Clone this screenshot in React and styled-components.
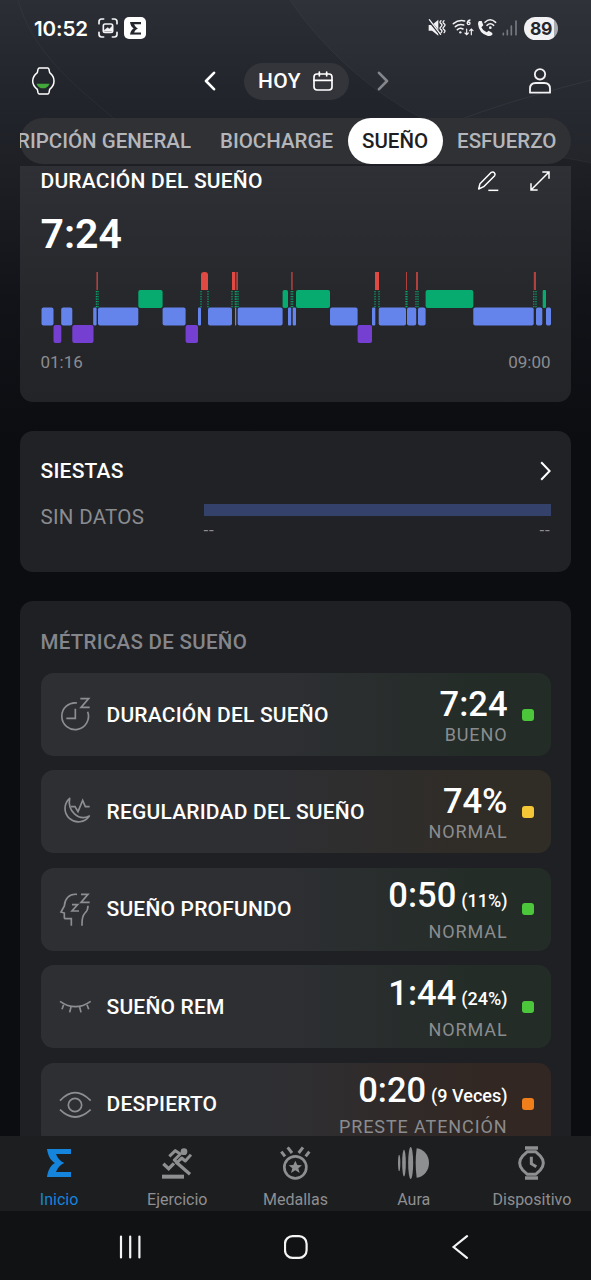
import React from 'react';
import styled, { createGlobalStyle } from 'styled-components';


const STAGES = {
    awake: { y: 0, color: '#e04a43' },
    rem: { y: 18, color: '#07ab70' },
    light: { y: 35.5, color: '#6484ec' },
    deep: { y: 53, color: '#7540d2' },
};

// [stage, start, end] along the 510 units of the night
const NIGHT = [
    ['light', 0.5, 12.5], ['deep', 12.5, 20.3], ['light', 20.2, 31.3], ['deep', 31.3, 52.5],
    ['light', 52.2, 55.6], ['awake', 55.4, 57], ['light', 57, 97.3], ['rem', 97.3, 121.6],
    ['light', 121.6, 144.6], ['deep', 144.6, 157], ['light', 157, 160], ['awake', 160, 167],
    ['light', 167, 191], ['awake', 191, 194.3], ['light', 194, 195.2], ['awake', 195.2, 197],
    ['light', 196.7, 241.6], ['rem', 241.6, 247], ['light', 247, 250.2], ['awake', 250.2, 251.7],
    ['light', 251.7, 255], ['rem', 255, 289], ['light', 289, 316.6], ['deep', 316.6, 331],
    ['light', 331, 334.3], ['awake', 334, 338], ['light', 337.7, 365], ['awake', 365, 366],
    ['light', 366, 375.2], ['awake', 375, 377], ['light', 377, 384.6], ['rem', 384.6, 432.3],
    ['light', 432.3, 492.7], ['awake', 492.8, 495], ['light', 495, 501.3], ['rem', 501.7, 505],
    ['light', 505, 510],
];

const TABS = [
    { name: 'DESCRIPCIÓN GENERAL' },
    { name: 'BIOCHARGE' },
    { name: 'SUEÑO', active: true },
    { name: 'ESFUERZO' },
];

const METRICS = [
    { icon: ClockIcon, name: 'DURACIÓN DEL SUEÑO', value: '7:24', status: 'BUENO', color: '#4cc73b', tint: '#232c27' },
    { icon: MoonIcon, name: 'REGULARIDAD DEL SUEÑO', value: '74%', status: 'NORMAL', color: '#f5c736', tint: '#302c26' },
    { icon: HeadIcon, name: 'SUEÑO PROFUNDO', value: '0:50', extra: '(11%)', status: 'NORMAL', color: '#4cc73b', tint: '#232c27' },
    { icon: LashesIcon, name: 'SUEÑO REM', value: '1:44', extra: '(24%)', status: 'NORMAL', color: '#4cc73b', tint: '#232c27' },
    { icon: EyeIcon, name: 'DESPIERTO', value: '0:20', extra: '(9 Veces)', status: 'PRESTE ATENCIÓN', color: '#f07f1b', tint: '#322722' },
];

const NAV = [
    { icon: SigmaIcon, name: 'Inicio', active: true },
    { icon: RunIcon, name: 'Ejercicio' },
    { icon: MedalIcon, name: 'Medallas' },
    { icon: AuraIcon, name: 'Aura' },
    { icon: DeviceIcon, name: 'Dispositivo' },
];

function App() {
    return (
        <Screen>
            <GlobalStyle />
            <Backdrop viewBox="0 0 591 300">
                <path d="M18 0 C30 42 58 72 104 110 L150 150" stroke="#fff" strokeOpacity=".04" />
                <path d="M290 0 C330 60 400 118 470 137 S560 156 591 163 V0 Z" fill="#fff" fillOpacity=".022" />
                <path d="M290 0 C330 60 400 118 470 137 S560 156 591 163" stroke="#fff" strokeOpacity=".04" />
                <path d="M400 150 C440 122 510 101 591 80" stroke="#fff" strokeOpacity=".05" />
            </Backdrop>

            <StatusBar>
                <Clock>10:52</Clock>
                <CaptureIcon />
                <AppBadge><SigmaIcon size={11} /></AppBadge>
                <Spacer />
                <StatusIcons />
                <Battery>89</Battery>
            </StatusBar>

            <Header>
                <WatchIcon />
                <DatePicker>
                    <Chevron left />
                    <DatePill>
                        <span>HOY</span>
                        <CalendarIcon />
                    </DatePill>
                    <Chevron dim />
                </DatePicker>
                <UserIcon />
            </Header>

            <TabBar>
                <TabScroll>
                    {TABS.map(tab => <Tab key={tab.name} $active={tab.active}>{tab.name}</Tab>)}
                </TabScroll>
            </TabBar>

            <Content>
                <DurationCard>
                    <CardHead>
                        <CardTitle>DURACIÓN DEL SUEÑO</CardTitle>
                        <Actions>
                            <PencilIcon />
                            <ExpandIcon />
                        </Actions>
                    </CardHead>
                    <Total>7:24</Total>
                    <SleepChart />
                    <TimeAxis><span>01:16</span><span>09:00</span></TimeAxis>
                </DurationCard>

                <NapCard>
                    <CardHead>
                        <CardTitle>SIESTAS</CardTitle>
                        <NapArrow viewBox="0 0 11 20"><path d="M1.2 1.2 L9.6 10 L1.2 18.8" /></NapArrow>
                    </CardHead>
                    <NapBody>
                        <NoData>SIN DATOS</NoData>
                        <NapTrack>
                            <NapBar />
                            <NapRange><span>--</span><span>--</span></NapRange>
                        </NapTrack>
                    </NapBody>
                </NapCard>

                <MetricsCard>
                    <MetricsTitle>MÉTRICAS DE SUEÑO</MetricsTitle>
                    {METRICS.map(({ icon: Icon, ...m }) => (
                        <MetricRow key={m.name} $tint={m.tint}>
                            <Icon />
                            <MetricName>{m.name}</MetricName>
                            <MetricResult>
                                <MetricValue>
                                    {m.value}
                                    {m.extra && <small>{m.extra}</small>}
                                </MetricValue>
                                <MetricStatus>{m.status}</MetricStatus>
                            </MetricResult>
                            <Dot $color={m.color} />
                        </MetricRow>
                    ))}
                </MetricsCard>
            </Content>

            <BottomNav>
                {NAV.map(({ icon: Icon, name, active }) => (
                    <NavItem key={name} $active={active}>
                        <NavIcon><Icon /></NavIcon>
                        <span>{name}</span>
                    </NavItem>
                ))}
            </BottomNav>

            <SystemNav>
                <svg width="24" height="24" viewBox="0 0 24 24"><path d="M2 1.5V22.5M11.2 1.5V22.5M20.4 1.5V22.5" /></svg>
                <svg width="24" height="24" viewBox="0 0 24 24"><rect x="1" y="1.2" width="21.6" height="21.6" rx="7.5" /></svg>
                <svg width="24" height="24" viewBox="0 0 24 24"><path d="M18 1.2L4.6 12L18 22.8" /></svg>
            </SystemNav>
        </Screen>
    )
}

export default App

function SleepChart() {
    return (
        <Chart viewBox="0 0 510 72">
            {NIGHT.map(([stage, from, to], i) => {
                const { y, color } = STAGES[stage];
                const width = to - from;
                if (stage === 'awake') {
                    const round = width > 5 ? 3 : 0;
                    return (
                        <g key={i}>
                            <path
                                d={`M${from} 18 V${round} q0 ${-round} ${round} ${-round} H${to - round} q${round} 0 ${round} ${round} V18 Z`}
                                fill={color}
                                opacity={width < 2.5 ? 0.75 : 1}
                            />
                            <path
                                d={`M${from} 19 V36 M${to} 19 V36`}
                                stroke="#07ab70"
                                strokeWidth="1.2"
                                strokeDasharray="1.2 1.3"
                            />
                        </g>
                    )
                }
                return <rect key={i} x={from} y={y} width={width} height="18" rx={Math.min(2, width / 3)} fill={color} />
            })}
        </Chart>
    )
}

function CaptureIcon() {
    return (
        <svg width="20" height="20" viewBox="0 0 60 60" fill="none" stroke="#f4f4f6" strokeWidth="5" strokeLinecap="round">
            <path d="M3 17V11Q3 3 11 3H17M43 3H49Q57 3 57 11V17M57 43V49Q57 57 49 57H43M17 57H11Q3 57 3 49V43" />
            <rect x="16" y="18" width="28" height="25" rx="5" />
            <path d="M19 37L29 29L34 33L42 26V39H19Z" fill="#f4f4f6" strokeWidth="2" />
        </svg>
    )
}

function StatusIcons() {
    return (
        <svg width="92" height="20" viewBox="0 0 276 60" fill="none" stroke="#f2f2f4" strokeWidth="5" strokeLinecap="round">
            <path d="M2 21H12L31 5V53L12 38H2Z" fill="#f2f2f4" stroke="none" />
            <path d="M2 6L37 49" stroke="#292c33" strokeWidth="8" />
            <path d="M4 5L38 49" strokeWidth="4" />
            <path d="M39 8q-6 5 0 9t0 9t0 9t0 9M48 8q-6 5 0 9t0 9t0 9t0 9" strokeWidth="4" />

            <path d="M76 17Q92 4 110 9M82 26Q93 17 107 21M88 35Q96 28 105 33" strokeWidth="4.5" />
            <circle cx="97" cy="43" r="3.5" fill="#f2f2f4" stroke="none" />
            <path d="M126 6Q118 7 118 16" strokeWidth="4" />
            <circle cx="122" cy="16" r="4" strokeWidth="4" />
            <path d="M116 33V49M111 45L116 50L121 45M130 50V33M125 38L130 33L135 38" strokeWidth="3.5" />

            <path d="M153 9L161 9L166 22L160 28Q165 39 176 43L182 38L193 45V50Q188 55 180 54Q153 47 150 18Q150 12 153 9Z" fill="#f2f2f4" stroke="none" />
            <path d="M171 13Q186 -2 203 13M177 22Q187 13 197 22" strokeWidth="4.5" />
            <circle cx="187" cy="29" r="4" fill="#f2f2f4" stroke="none" />

            <path d="M226 46V50M238 37V50M250 24V50M264 9V50" stroke="#777a80" strokeWidth="5" />
        </svg>
    )
}

function WatchIcon() {
    return (
        <svg width="24" height="30" viewBox="0 0 72 90" fill="none">
            <path
                d="M25 6H50Q53 6 54 10L56 20C65 27 69 34 69 45C69 56 65 63 56 70L54 80Q53 84 50 84H25Q22 84 21 80L19 70C10 63 5 56 5 45C5 34 10 27 19 20L21 10Q22 6 25 6Z"
                stroke="#fff"
                strokeWidth="4.5"
            />
            <path d="M16 53H56Q49 67 36 67T16 53Z" fill="#42a63a" />
        </svg>
    )
}

function Chevron({ left, dim }) {
    return (
        <svg width="12" height="20" viewBox="0 0 12 20" fill="none" stroke={dim ? '#85868c' : '#fff'} strokeWidth="2.6" strokeLinecap="round" strokeLinejoin="round">
            <path d={left ? 'M10 1.8L2 10L10 18.2' : 'M2 1.8L10 10L2 18.2'} />
        </svg>
    )
}

function CalendarIcon() {
    return (
        <svg width="20" height="20" viewBox="0 0 60 60" fill="none" stroke="#fff" strokeWidth="5" strokeLinecap="round">
            <rect x="3" y="9" width="54" height="48" rx="9" />
            <path d="M3 28H57M19 3V15M41 3V15" />
        </svg>
    )
}

function UserIcon() {
    return (
        <svg width="22" height="26" viewBox="0 0 66 78" fill="none" stroke="#f2f2f4" strokeWidth="5.5">
            <circle cx="33" cy="19" r="15.5" />
            <path d="M3 74V62Q3 45 20 45H46Q63 45 63 62V74Z" strokeLinejoin="round" />
        </svg>
    )
}

function PencilIcon() {
    return (
        <svg width="22" height="22" viewBox="0 0 66 66" fill="none" stroke="#fff" strokeWidth="4.5" strokeLinejoin="round">
            <path d="M5 57L9 41L43 7Q48 4 52 8Q56 12 53 17L20 50Z" />
            <path d="M34 61H64" />
        </svg>
    )
}

function ExpandIcon() {
    return (
        <svg width="20" height="20" viewBox="0 0 60 60" fill="none" stroke="#fff" strokeWidth="4.5">
            <path d="M37 3H57V23M57 3L3 57M3 37V57H23" />
        </svg>
    )
}

function ClockIcon() {
    return (
        <MetricIcon viewBox="0 0 99 105">
            <path d="M54 18A40 40 0 1 0 86 44" />
            <path d="M49 35V64H22" />
            <path d="M64 5H89L66 31H92" />
        </MetricIcon>
    )
}

function MoonIcon() {
    return (
        <MetricIcon viewBox="0 0 99 105">
            <path d="M32 13A40 40 0 1 0 91 66C58 83 25 50 32 13Z" strokeLinejoin="round" />
            <path d="M36 38H48L57 53L71 19L79 38H92" />
        </MetricIcon>
    )
}

function HeadIcon() {
    return (
        <MetricIcon viewBox="0 0 99 105">
            <path d="M54 7C30 4 17 22 16 42L6 60L16 63V77Q16 80 20 80H37V101" />
            <path d="M66 7H87L66 31H92M39 38H56L39 57H60" />
            <path d="M87 41Q87 55 78 63Q68 73 69 101" />
        </MetricIcon>
    )
}

function LashesIcon() {
    return (
        <MetricIcon viewBox="0 0 99 105">
            <path d="M3 37Q49 69 95 37" />
            <path d="M14 47L9 61M36 54L32 70M62 54L66 70M84 47L89 61" />
        </MetricIcon>
    )
}

function EyeIcon() {
    return (
        <MetricIcon viewBox="0 0 99 105">
            <path d="M3 41Q48 -7 95 41M3 68Q48 112 95 68" />
            <circle cx="48" cy="54" r="20" />
        </MetricIcon>
    )
}

function SigmaIcon({ size = 24 }) {
    return (
        <svg width={size} height={size * 28 / 24} viewBox="0 0 72 84" fill="currentColor">
            <path d="M0 0H72V15H27C32 27 40 38 52 42C40 46 32 57 27 69H72V84H0C3 64 10 50 24 42C10 34 3 20 0 0Z" />
        </svg>
    )
}

function RunIcon() {
    return (
        <svg width="30" height="31" viewBox="0 0 90 93" fill="none" stroke="currentColor" strokeWidth="10">
            <circle cx="66" cy="11" r="10" fill="currentColor" stroke="none" />
            <path d="M22 25L40 8L55 18L37 36L45 44L59 30L70 39L87 20" strokeWidth="9" strokeLinejoin="round" />
            <path d="M4 47L20 62L36 46M42 42L84 79" />
            <path d="M0 86H66" strokeWidth="12" />
        </svg>
    )
}

function MedalIcon() {
    return (
        <svg width="31" height="34" viewBox="0 0 93 102" fill="none" stroke="currentColor" strokeWidth="8">
            <circle cx="46" cy="64" r="33" />
            <path d="M46 44L52 57L66 58L55 67L59 81L46 73L33 81L37 67L26 58L40 57Z" fill="currentColor" stroke="none" />
            <path d="M4 17L15 31M23 4L36 21M69 4L56 21M88 17L77 31" strokeWidth="9" />
        </svg>
    )
}

function AuraIcon() {
    return (
        <svg width="31" height="32" viewBox="0 0 93 96" fill="currentColor">
            <ellipse cx="3.5" cy="48" rx="3.5" ry="25" />
            <ellipse cx="18" cy="48" rx="5.5" ry="40" />
            <ellipse cx="38" cy="48" rx="7.5" ry="48" />
            <path d="M56 4C77 6 93 25 93 48S77 90 56 92Q53 70 53 48T56 4Z" />
        </svg>
    )
}

function DeviceIcon() {
    return (
        <svg width="27" height="34" viewBox="0 0 81 102" fill="none" stroke="currentColor" strokeWidth="9">
            <path d="M28 17H53L67 30Q76 40 76 51T67 72L53 85H28L14 72Q5 62 5 51T14 30Z" />
            <path d="M21 6H60M21 96H60" strokeWidth="11" />
            <path d="M40 32V53L55 62" />
        </svg>
    )
}

const GlobalStyle = createGlobalStyle`
    body {
        margin: 0;
        background: #0c0d11;
    }

    * {
        box-sizing: border-box;
    }

    svg {
        display: block;
        flex-shrink: 0;
    }
`

const Screen = styled.div`
    position: relative;
    width: 591px;
    height: 1280px;
    display: flex;
    flex-direction: column;
    overflow: hidden;
    color: #fff;
    font-family: Roboto, "Liberation Sans", sans-serif;
    font-weight: 500;
    background: linear-gradient(#2b2e35 0, #22252c 90px, #1e2026 160px, #121318 300px, #0c0d11 440px);
`

const Backdrop = styled.svg`
    position: absolute;
    top: 0;
    left: 0;
    width: 591px;
    height: 300px;
    fill: none;
`

const StatusBar = styled.div`
    position: relative;
    height: 56px;
    padding: 0 33px 0 34px;
    display: flex;
    align-items: center;
`

const Clock = styled.span`
    width: 64px;
    font-family: Inter, sans-serif;
    font-size: 20.5px;
    font-weight: 600;
    letter-spacing: -0.1px;
`

const AppBadge = styled.span`
    width: 22px;
    height: 22px;
    margin-left: 6px;
    display: flex;
    align-items: center;
    justify-content: center;
    border-radius: 5px;
    background: #fff;
    color: #25272d;

    svg {
        transform: rotate(180deg) scaleX(-1);
    }
`

const Spacer = styled.div`
    flex: 1;
`

const Battery = styled.span`
    width: 34px;
    height: 23px;
    margin-left: 4px;
    border-radius: 12px;
    background: linear-gradient(90deg, #f1f1f4 30px, #a9abb0 30px);
    color: #24262c;
    font-family: Inter, sans-serif;
    font-size: 17.5px;
    font-weight: 700;
    line-height: 24px;
    text-align: center;
    letter-spacing: -0.5px;
`

const Header = styled.header`
    position: relative;
    height: 50px;
    margin-bottom: 12px;
    padding: 0 40px 0 31px;
    display: grid;
    grid-template-columns: 173px auto 1fr;
    align-items: center;

    > svg:last-child {
        justify-self: end;
    }
`

const DatePicker = styled.div`
    display: flex;
    align-items: center;
    gap: 28px;
`

const DatePill = styled.div`
    width: 105px;
    height: 37px;
    padding: 0 16px 0 14px;
    display: flex;
    align-items: center;
    justify-content: space-between;
    border-radius: 19px;
    background: #34353a;
    font-size: 21px;
    letter-spacing: 0.4px;
`

const TabBar = styled.nav`
    position: relative;
    height: 46px;
    margin: 0 20px 2px;
    border-radius: 23px;
    background: #2f3135;
`

const TabScroll = styled.div`
    height: 100%;
    display: flex;
    justify-content: flex-end;
    overflow: hidden;
`

const Tab = styled.div`
    height: 46px;
    padding: 0 14.5px;
    flex-shrink: 0;
    border-radius: 23px;
    background: ${props => props.$active ? '#fff' : 'transparent'};
    color: ${props => props.$active ? '#1d1e22' : '#b5b6ba'};
    font-size: 20.5px;
    line-height: 46px;
    white-space: nowrap;
`

const Content = styled.main`
    position: relative;
    flex: 1;
    min-height: 0;
    padding: 0 20px;
    display: flex;
    flex-direction: column;
    gap: 29px;
    overflow: hidden;
`

const Card = styled.section`
    flex-shrink: 0;
    padding: 0 20.5px;
    border-radius: 13px;
    background: #212226;
`

const DurationCard = styled(Card)`
    height: 236px;
    border-radius: 0 0 13px 13px;
    background: linear-gradient(#2f3035, #26272b 60%, #232428);
`

const NapCard = styled(Card)`
    height: 141px;
    padding-top: 25px;
`

const MetricsCard = styled(Card)`
    height: 600px;
    background: #1f2024;
`

const CardHead = styled.div`
    height: 30px;
    display: flex;
    align-items: center;
    justify-content: space-between;
`

const CardTitle = styled.h2`
    margin: 0;
    font-size: 21px;
    font-weight: 500;
    letter-spacing: 0.2px;
`

const Actions = styled.div`
    display: flex;
    align-items: center;
    gap: 31px;
    padding-right: 1px;
`

const Total = styled.div`
    height: 76px;
    font-size: 41px;
    font-weight: 600;
    line-height: 76px;
`

const Chart = styled.svg`
    width: 510px;
    height: 72px;
    overflow: visible;
`

const TimeAxis = styled.div`
    margin-top: 7px;
    display: flex;
    justify-content: space-between;
    color: #8b8c90;
    font-size: 17px;
    font-weight: 400;
    line-height: 22px;
`

const NapArrow = styled.svg`
    width: 11px;
    height: 20px;
    fill: none;
    stroke: #fff;
    stroke-width: 2;
`

const NapBody = styled.div`
    display: flex;
    justify-content: space-between;
    color: #8b8c90;
    font-weight: 400;
`

const NoData = styled.div`
    padding-top: 18px;
    font-size: 20.5px;
    line-height: 26px;
    letter-spacing: 0.3px;
`

const NapTrack = styled.div`
    width: 347px;
    padding-top: 18px;
`

const NapBar = styled.div`
    height: 12px;
    background: #34416a;
`

const NapRange = styled.div`
    display: flex;
    justify-content: space-between;
    font-size: 17px;
    line-height: 28px;
    letter-spacing: 0.8px;
`

const MetricsTitle = styled.h2`
    height: 72px;
    margin: 0;
    padding-top: 28px;
    color: #85868b;
    font-size: 20.5px;
    font-weight: 500;
    line-height: 26px;
    letter-spacing: 0.3px;
`

const MetricRow = styled.div`
    height: 83px;
    margin-bottom: 14.4px;
    padding: 0 17px 0 18px;
    display: flex;
    align-items: center;
    border-radius: 13px;
    background: linear-gradient(90deg, #2e2f33 45%, ${props => props.$tint} 88%);
`

const MetricIcon = styled.svg`
    width: 33px;
    height: 35px;
    fill: none;
    stroke: #8d8e92;
    stroke-width: 5;
`

const MetricName = styled.div`
    flex: 1;
    margin-left: 15px;
    font-size: 21px;
    letter-spacing: 0.2px;
    white-space: nowrap;
`

const MetricResult = styled.div`
    margin-right: 14px;
    text-align: right;
`

const MetricValue = styled.div`
    font-size: 34.5px;
    line-height: 40px;

    small {
        margin-left: 5px;
        font-size: 18px;
    }
`

const MetricStatus = styled.div`
    color: #8b8c8f;
    font-size: 18px;
    font-weight: 400;
    line-height: 22px;
    letter-spacing: 0.9px;
`

const Dot = styled.span`
    width: 12px;
    height: 12px;
    border-radius: 3px;
    background: ${props => props.$color};
`

const BottomNav = styled.nav`
    position: relative;
    height: 75px;
    display: grid;
    grid-template-columns: repeat(5, 1fr);
    background: #1d1e20;
`

const NavItem = styled.div`
    display: flex;
    flex-direction: column;
    align-items: center;
    color: ${props => props.$active ? '#1484dc' : '#8e8f91'};
    font-size: 16px;
    font-weight: 400;
    line-height: 20px;
`

const NavIcon = styled.div`
    height: 54px;
    display: flex;
    align-items: center;
    justify-content: center;
`

const SystemNav = styled.div`
    position: relative;
    height: 69px;
    padding: 3px 118px 0 119px;
    display: flex;
    align-items: center;
    justify-content: space-between;
    background: #111214;

    svg {
        fill: none;
        stroke: #f4f4f4;
        stroke-width: 2.2;
        stroke-linecap: round;
    }
`
